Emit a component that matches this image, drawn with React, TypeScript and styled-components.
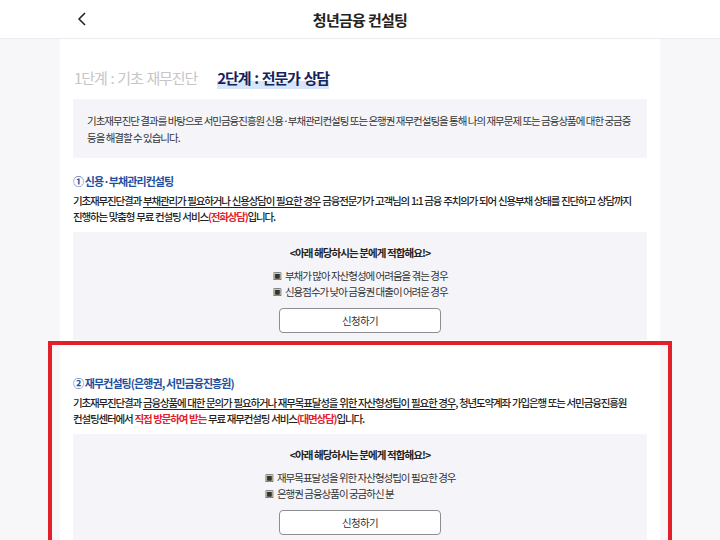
import type { ReactNode } from "react";
import styled, { createGlobalStyle } from "styled-components";

const GlobalStyle = createGlobalStyle`
  html, body {
    margin: 0;
    padding: 0;
    background: #f7f7fa;
    font-family: "Noto Sans CJK KR", "Noto Sans", sans-serif;
    color: #222;
  }
  * { box-sizing: border-box; }
`;

type Section = {
  no: string;
  title: string;
  body: ReactNode;
  items: string[];
  marked?: boolean;
};

// built lazily: the styled Red span is declared further down
const getSections = (): Section[] => [
  {
    no: "①",
    title: "신용·부채관리컨설팅",
    body: (
      <>
        기초재무진단결과 <u>부채관리가 필요하거나 신용상담이 필요한 경우</u> 금융전문가가 고객님의 1:1 금융
        주치의가 되어 신용부채 상태를 진단하고 상담까지
        <br />
        진행하는 맞춤형 무료 컨설팅 서비스<Red>(전화상담)</Red>입니다.
      </>
    ),
    items: ["부채가 많아 자산형성에 어려움을 겪는 경우", "신용점수가 낮아 금융권 대출이 어려운 경우"],
  },
  {
    no: "②",
    title: "재무컨설팅(은행권, 서민금융진흥원)",
    body: (
      <>
        기초재무진단결과 <u>금융상품에 대한 문의가 필요하거나 재무목표달성을 위한 자산형성팁이 필요한 경우</u>,
        청년도약계좌 가입은행 또는 서민금융진흥원
        <br />
        컨설팅센터에서 <Red>직접 방문하여 받는</Red> 무료 재무컨설팅 서비스<Red>(대면상담)</Red>입니다.
      </>
    ),
    items: ["재무목표달성을 위한 자산형성팁이 필요한 경우", "은행권 금융상품이 궁금하신 분"],
    marked: true,
  },
];

export default function App() {
  const sections = getSections();
  return (
    <>
      <GlobalStyle />
      <Header>
        <HeaderInner>
          <BackButton aria-label="뒤로">
            <svg width="8" height="14" viewBox="0 0 8 14" fill="none">
              <polyline points="7,1 1,7 7,13" stroke="#222" strokeWidth="1.6" strokeLinejoin="round" />
            </svg>
          </BackButton>
          <HeaderTitle>청년금융 컨설팅</HeaderTitle>
          <span />
        </HeaderInner>
      </Header>
      <Card>
        <Tabs>
          <Tab>1단계 : 기초 재무진단</Tab>
          <Tab $active>2단계 : 전문가 상담</Tab>
        </Tabs>
        <Intro>
          기초재무진단 결과를 바탕으로 서민금융진흥원 신용·부채관리컨설팅 또는 은행권 재무컨설팅을 통해 나의 재무문제 또는
          금융상품에 대한 궁금증
          <br />
          등을 해결할 수 있습니다.
        </Intro>
        {sections.map((s) => (
          <SectionBlock key={s.no} $marked={s.marked}>
            {s.marked && <MarkFrame />}
            <SectionTitle>
              {s.no} {s.title}
            </SectionTitle>
            <SectionText>{s.body}</SectionText>
            <FitBox>
              <FitTitle>&lt;아래 해당하시는 분에게 적합해요!&gt;</FitTitle>
              <FitList>
                {s.items.map((item) => (
                  <FitItem key={item}>
                    <Bullet>▣</Bullet>
                    {item}
                  </FitItem>
                ))}
              </FitList>
              <ApplyButton>신청하기</ApplyButton>
            </FitBox>
          </SectionBlock>
        ))}
      </Card>
    </>
  );
}

const Header = styled.header`
  background: #fff;
  border-bottom: 1px solid #ececef;
`;

const HeaderInner = styled.div`
  width: 600px;
  height: 38px;
  margin: 0 auto;
  display: grid;
  grid-template-columns: 40px 1fr 40px;
  align-items: center;
`;

const BackButton = styled.button`
  border: 0;
  background: none;
  padding: 0 0 0 18px;
  height: 100%;
  display: flex;
  align-items: center;
  cursor: pointer;
`;

const HeaderTitle = styled.h1`
  margin: 0;
  text-align: center;
  font-size: 15px;
  font-weight: 700;
  letter-spacing: -0.7px;
  color: #222;
`;

const Card = styled.main`
  width: 600px;
  margin: 0 auto;
  background: #fff;
  padding: 28px 13px 40px;
`;

const Tabs = styled.div`
  display: flex;
  align-items: baseline;
  gap: 20px;
  padding-left: 1px;
`;

const Tab = styled.div<{ $active?: boolean }>`
  font-size: 15px;
  line-height: 22px;
  letter-spacing: -1.1px;
  word-spacing: 1.5px;
  font-weight: ${(p) => (p.$active ? 700 : 400)};
  color: ${(p) => (p.$active ? "#15235c" : "#c6c6c8")};
  background: ${(p) => (p.$active ? "linear-gradient(transparent 62%, #d6e5f8 62%)" : "none")};
`;

const Intro = styled.div`
  margin-top: 10px;
  background: #f5f5f9;
  padding: 13px 14px 12px;
  font-size: 10.5px;
  line-height: 17px;
  letter-spacing: -1px;
  color: #333;
`;

const SectionBlock = styled.section<{ $marked?: boolean }>`
  position: relative;
  margin-top: ${(p) => (p.$marked ? "35px" : "15px")};
`;

const MarkFrame = styled.div`
  position: absolute;
  top: -34px;
  left: -25px;
  right: -25px;
  height: 240px;
  border: 4px solid #e2202a;
  pointer-events: none;
`;

const SectionTitle = styled.h2`
  margin: 0;
  font-size: 11px;
  line-height: 16px;
  font-weight: 700;
  letter-spacing: -0.9px;
  color: #1f4f9e;
`;

const SectionText = styled.p`
  margin: 4px 0 0;
  font-size: 10.5px;
  line-height: 16px;
  font-weight: 500;
  letter-spacing: -1.15px;
  word-spacing: 0.6px;
  color: #222;
  white-space: nowrap;

  u {
    text-underline-offset: 2px;
  }
`;

const Red = styled.span`
  color: #e3222b;
  font-weight: 700;
`;

const FitBox = styled.div`
  margin-top: 7px;
  background: #f5f5f9;
  padding: 13px 0 7px;
  display: flex;
  flex-direction: column;
  align-items: center;
`;

const FitTitle = styled.div`
  font-size: 10.5px;
  line-height: 16px;
  font-weight: 700;
  letter-spacing: -0.9px;
  color: #222;
`;

const FitList = styled.ul`
  list-style: none;
  margin: 7px 0 0;
  padding: 0;
`;

const FitItem = styled.li`
  font-size: 10.5px;
  line-height: 16px;
  letter-spacing: -1px;
  color: #333;
  display: flex;
  align-items: center;
`;

const Bullet = styled.span`
  font-family: "DejaVu Sans", sans-serif;
  font-size: 10px;
  margin-right: 3px;
  letter-spacing: 0;
`;

const ApplyButton = styled.button`
  margin-top: 8px;
  width: 162px;
  height: 25px;
  background: #fff;
  border: 1px solid #8e8e92;
  border-radius: 4px;
  font-family: "Noto Sans CJK KR", sans-serif;
  font-size: 10.5px;
  letter-spacing: -0.6px;
  color: #333;
`;
